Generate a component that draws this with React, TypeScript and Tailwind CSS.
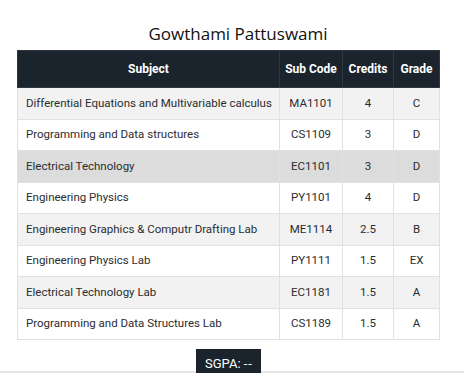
const rows = [
  ["Differential Equations and Multivariable calculus", "MA1101", "4", "C"],
  ["Programming and Data structures", "CS1109", "3", "D"],
  ["Electrical Technology", "EC1101", "3", "D"],
  ["Engineering Physics", "PY1101", "4", "D"],
  ["Engineering Graphics & Computr Drafting Lab", "ME1114", "2.5", "B"],
  ["Engineering Physics Lab", "PY1111", "1.5", "EX"],
  ["Electrical Technology Lab", "EC1181", "1.5", "A"],
  ["Programming and Data Structures Lab", "CS1189", "1.5", "A"],
];

const rowBg = (i: number) => {
  if (i === 2) return "bg-[#dcdcdc]";
  return i % 2 === 0 ? "bg-[#f2f2f2]" : "bg-white";
};

export default function App() {
  return (
    <div className="w-[464px] h-[373px] overflow-hidden bg-white font-['Roboto',sans-serif] text-[#2a2d30]">
      <h1 className="pt-[22px] pl-[12px] h-[50px] text-center font-['Open_Sans',sans-serif] text-[17px] leading-[24px] text-[#111]">
        Gowthami Pattuswami
      </h1>

      <table className="ml-[17px] w-[422px] table-fixed border-collapse text-[11.5px]">
        <colgroup>
          <col className="w-[262px]" />
          <col className="w-[63px]" />
          <col className="w-[51px]" />
          <col className="w-[46px]" />
        </colgroup>
        <thead>
          <tr className="h-[37px] bg-[#1b242c] text-[12px] text-white">
            <th className="border border-[#2e3840] font-bold">Subject</th>
            <th className="border border-[#2e3840] font-bold">Sub Code</th>
            <th className="border border-[#2e3840] font-bold">Credits</th>
            <th className="border border-[#2e3840] font-bold">Grade</th>
          </tr>
        </thead>
        <tbody>
          {rows.map((r, i) => (
            <tr key={r[1]} className={`h-[31.5px] ${rowBg(i)}`}>
              <td className="border border-[#dee2e6] pl-[8px] whitespace-nowrap">{r[0]}</td>
              <td className="border border-[#dee2e6] text-center">{r[1]}</td>
              <td className="border border-[#dee2e6] text-center">{r[2]}</td>
              <td className="border border-[#dee2e6] text-center">{r[3]}</td>
            </tr>
          ))}
        </tbody>
      </table>

      <div className="relative z-10 mt-[9px] flex pl-[196px]">
        <div className="h-[30px] bg-[#1b242c] px-[9px] pt-[7px] text-[13px] leading-[16px] text-white">
          SGPA: -<span className="ml-[1px]">-</span>
        </div>
      </div>
      <div className="-mt-[8px] h-[3px] w-full bg-[#e6e6e6]" />
    </div>
  );
}
